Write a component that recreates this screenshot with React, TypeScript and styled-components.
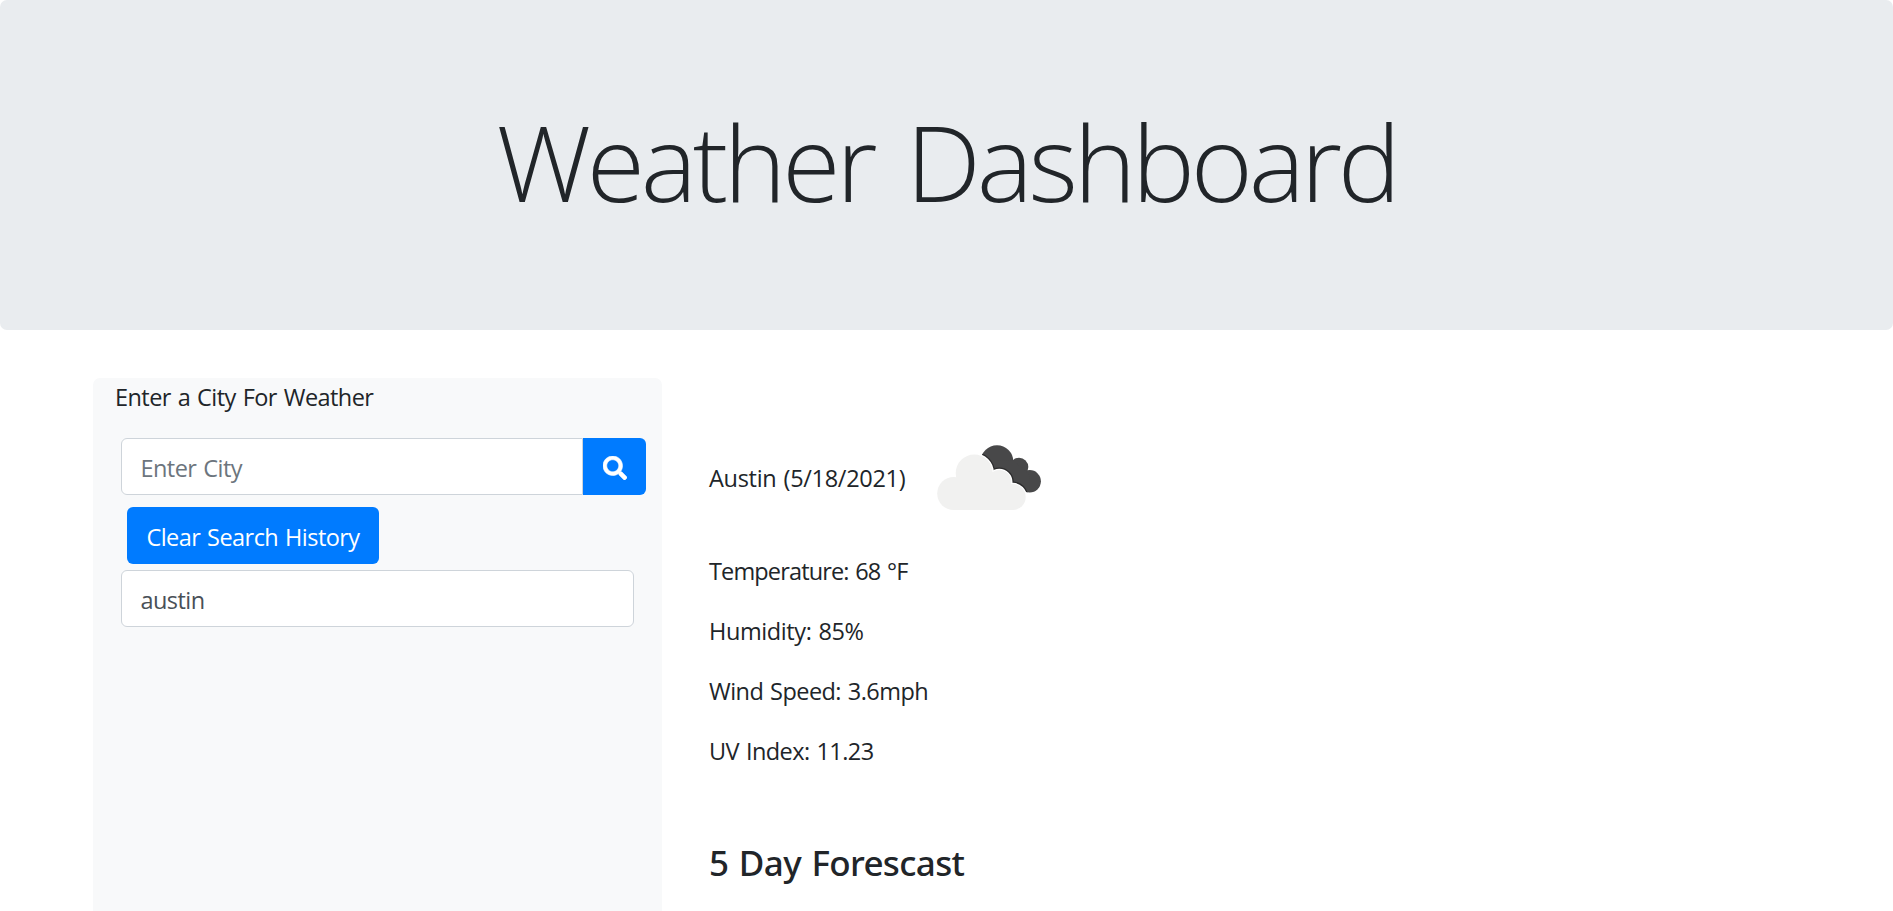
import React from "react";
import styled, { createGlobalStyle } from "styled-components";
import { FaSearch } from "react-icons/fa";

const GlobalStyle = createGlobalStyle`
  *, *::before, *::after { box-sizing: border-box; }
  body {
    margin: 0;
    background: #fff;
    color: #212529;
    font: 400 23.5px/36px "Open Sans", "Liberation Sans", sans-serif;
    letter-spacing: -0.55px;
    word-spacing: 1.3px;
  }
`;

const Page = styled.div`
  display: flex;
  flex-direction: column;
  height: 100vh;
  overflow: hidden;
`;

const Hero = styled.header`
  flex: none;
  height: 330px;
  padding: 97px 48px 95px;
  text-align: center;
  background: #e9ecef;
  border-radius: 7px;
`;

const Title = styled.h1`
  margin: 0;
  font-size: 106px;
  font-weight: 300;
  line-height: 129.6px;
  letter-spacing: -4.25px;
  word-spacing: 9.6px;
`;

const Columns = styled.main`
  flex: 1;
  display: flex;
  gap: 47px;
  padding: 48px 93px 0;
`;

const SearchPanel = styled.section`
  width: 569px;
  padding-top: 1px;
  background: #f8f9fa;
  border-radius: 7px 7px 0 0;
`;

const PanelLabel = styled.label`
  display: block;
  margin: 0 0 23px 22px;
`;

const Field = styled.input<{ $joined?: boolean }>`
  display: block;
  width: ${(p) => (p.$joined ? "462px" : "513px")};
  height: 57px;
  margin: 0;
  padding: 3px 18px 0 18.5px;
  font: inherit;
  letter-spacing: inherit;
  word-spacing: inherit;
  color: #495057;
  background: #fff;
  border: 1px solid #ced4da;
  border-radius: ${(p) => (p.$joined ? "6px 0 0 6px" : "6px")};
  outline: none;
  &::placeholder { color: #6c757d; opacity: 1; }
`;

const InputGroup = styled.form`
  display: flex;
  margin: 0 0 12px 28px;
`;

const Button = styled.button`
  height: 57px;
  padding: 2px 0 0;
  border: 0;
  font: inherit;
  letter-spacing: inherit;
  word-spacing: inherit;
  color: #fff;
  background: #007bff;
`;

const SearchButton = styled(Button)`
  display: flex;
  align-items: center;
  justify-content: center;
  width: 63px;
  border-radius: 0 6px 6px 0;
`;

const SearchIcon = styled(FaSearch)`
  stroke: currentColor;
  stroke-width: 12px;
`;

const ClearButton = styled(Button)`
  display: block;
  width: 252px;
  margin: 0 0 6px 34px;
  border-radius: 6px;
`;

const History = styled.div`
  margin-left: 28px;
`;

const Weather = styled.section`
  padding-top: 25px;
`;

const CityRow = styled.div`
  display: flex;
  align-items: center;
  gap: 32px;
  height: 150px;
  letter-spacing: -0.3px;
`;

const Stat = styled.p<{ $tracking?: string }>`
  margin: 0 0 24px;
  letter-spacing: ${(p) => p.$tracking ?? "inherit"};
`;

const ForecastTitle = styled.h2`
  margin: 72px 0 0;
  font: 500 35px/43px "Noto Sans", "Open Sans", sans-serif;
  letter-spacing: -0.65px;
  word-spacing: 2px;
`;

const darkCloud = (
  <>
    <circle cx="60" cy="16.5" r="16.3" />
    <circle cx="82" cy="22" r="9.3" />
    <circle cx="92.7" cy="36.3" r="11.2" />
    <path d="M60 16 76 15 84 22 93 30 92 47 60 40Z" />
  </>
);

const lightCloud = (
  <>
    <circle cx="16.7" cy="48.5" r="16.5" />
    <circle cx="37.2" cy="28" r="18.5" />
    <circle cx="62.3" cy="37" r="12" />
    <circle cx="75.7" cy="52" r="13" />
    <path d="M16.5 65V34L37 25 62 34 76 50V65Z" />
  </>
);

function BrokenClouds() {
  return (
    <svg width="104" height="66" viewBox="0 0 104 66" aria-label="broken clouds">
      <defs>
        <clipPath id="dark">{darkCloud}</clipPath>
      </defs>
      <g fill="#484849">{darkCloud}</g>
      <g clipPath="url(#dark)">
        <g fill="#2b2b2c" stroke="#2b2b2c" strokeWidth="5">{lightCloud}</g>
      </g>
      <g fill="#fff" stroke="#fff" strokeWidth="2.4">{lightCloud}</g>
      <g fill="#f1f1f0">{lightCloud}</g>
    </svg>
  );
}

export default function App() {
  return (
    <Page>
      <GlobalStyle />
      <Hero>
        <Title>Weather Dashboard</Title>
      </Hero>
      <Columns>
        <SearchPanel>
          <PanelLabel htmlFor="city">Enter a City For Weather</PanelLabel>
          <InputGroup>
            <Field id="city" $joined placeholder="Enter City" />
            <SearchButton type="button" aria-label="Search">
              <SearchIcon size={24} />
            </SearchButton>
          </InputGroup>
          <ClearButton type="button">Clear Search History</ClearButton>
          <History>
            <Field readOnly defaultValue="austin" />
          </History>
        </SearchPanel>
        <Weather>
          <CityRow>
            <span>Austin (5/18/2021)</span>
            <BrokenClouds />
          </CityRow>
          <Stat $tracking="-0.85px">Temperature: 68 °F</Stat>
          <Stat $tracking="-0.4px">Humidity: 85%</Stat>
          <Stat>Wind Speed: 3.6mph</Stat>
          <Stat>UV Index: 11.23</Stat>
          <ForecastTitle>5 Day Forescast</ForecastTitle>
        </Weather>
      </Columns>
    </Page>
  );
}
